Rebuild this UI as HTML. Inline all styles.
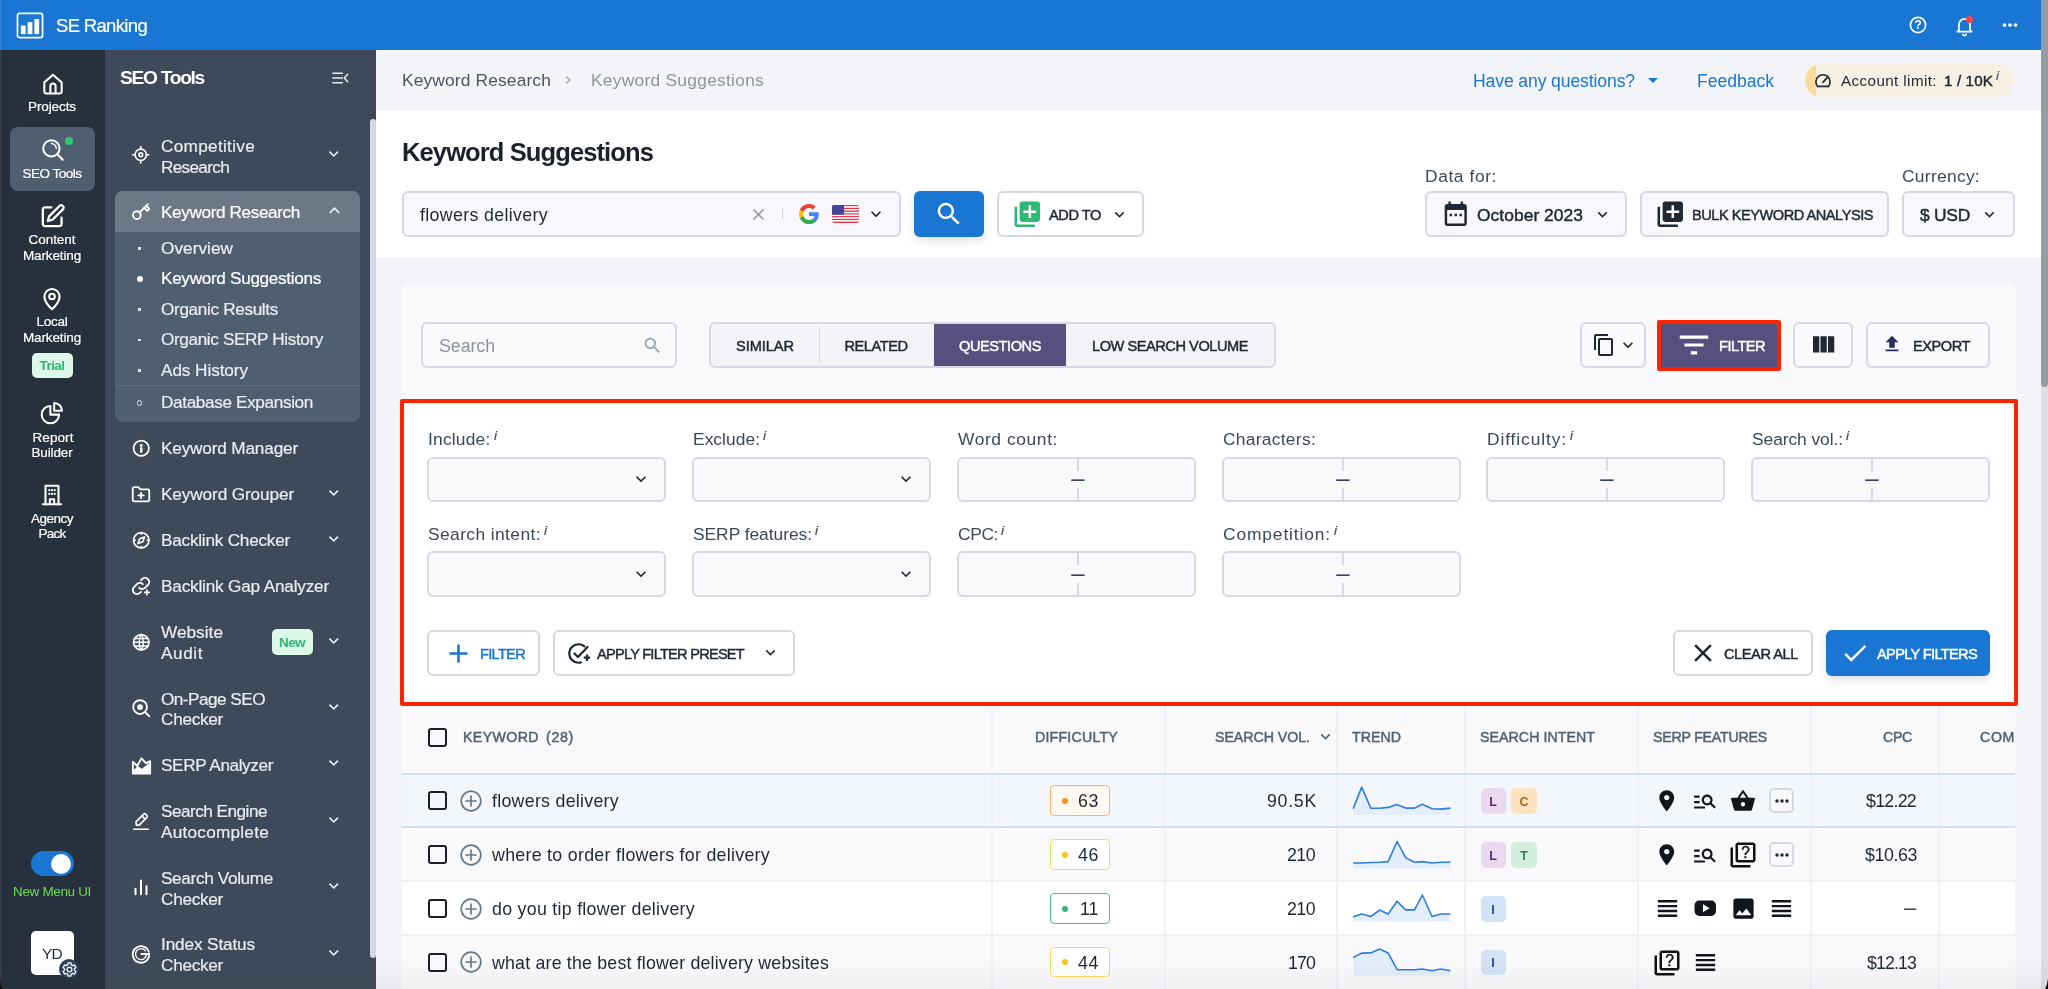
<!DOCTYPE html>
<html lang="en"><head><meta charset="utf-8"><title>Keyword Suggestions - SE Ranking</title><style>
html,body{margin:0;padding:0}
body{width:2048px;height:989px;overflow:hidden;position:relative;background:#f3f4f8;font-family:"Liberation Sans",sans-serif;-webkit-font-smoothing:antialiased}
.b{position:absolute;display:block}
.t{position:absolute;white-space:nowrap;will-change:transform}
</style></head><body>
<div class="b" style="left:376px;top:50px;width:1665px;height:60px;background:#f3f4f8;"></div>
<div class="b" style="left:376px;top:110px;width:1665px;height:148px;background:#ffffff;"></div>
<div class="b" style="left:376px;top:258px;width:1665px;height:731px;background:#f3f4f8;"></div>
<div class="b" style="left:2041px;top:0px;width:7px;height:989px;background:#dddde3;"></div>
<div class="b" style="left:2041px;top:0px;width:7px;height:387px;background:#979ba4;border-radius:0 0 4px 4px;"></div>
<div class="b" style="left:0px;top:0px;width:2041px;height:50px;background:#1976d2;"></div>
<div class="b" style="left:0px;top:50px;width:105px;height:939px;background:#26313d;"></div>
<div class="b" style="left:105px;top:50px;width:271px;height:939px;background:#3e4a59;"></div>
<div class="b" style="left:370px;top:119px;width:6px;height:839px;background:#d6d8e8;border-radius:3px;"></div>
<div class="b" style="left:0px;top:0px;width:1px;height:50px;background:#2f83da;"></div>
<div class="b" style="left:0px;top:50px;width:1px;height:939px;background:#343f4c;"></div>
<svg class="b" style="left:15.5px;top:11.5px;" width="28" height="27" viewBox="0 0 29 28"><rect x="1.5" y="1.5" width="26" height="25" rx="2" fill="none" stroke="#fff" stroke-width="1.8"/><rect x="5" y="14" width="5" height="9" fill="#fff"/><rect x="12" y="10.5" width="5" height="12.5" fill="#fff"/><rect x="19" y="7.200" width="5" height="15.800" fill="#fff"/></svg>
<div class="t" style="top:13.5px;font-size:18.5px;line-height:24px;color:#fff;-webkit-text-stroke:0.2px #fff;letter-spacing:-0.67px;left:56px;">SE Ranking</div>
<svg class="b" style="left:1907.8px;top:14.5px;will-change:transform;" width="20" height="20" viewBox="0 0 20 20"><circle cx="10" cy="10" r="7.6" fill="none" stroke="#fff" stroke-width="1.7"/><text x="10" y="14.400" font-size="12.5" font-weight="700" fill="#fff" text-anchor="middle" font-family="Liberation Sans, sans-serif">?</text></svg>
<svg class="b" style="left:1952.5px;top:13.5px;" width="23" height="23" viewBox="0 0 24 24"><g fill="none" stroke="#fff" stroke-width="1.8" stroke-linecap="round" stroke-linejoin="round"><path d="M6.200 16.800V11a5.800 5.800 0 0 1 11.600 0v5.800l1.700 1.500H4.500z"/><path d="M10.300 21.300a1.800 1.800 0 0 0 3.400 0"/></g></svg>
<div class="b" style="left:1966px;top:16px;width:7px;height:7px;border-radius:4px;background:#ff4545"></div>
<svg class="b" style="left:1999.0px;top:14.0px;" width="22" height="22" viewBox="0 0 24 24"><path d="M6 10c-1.1 0-2 .9-2 2s.9 2 2 2 2-.9 2-2-.9-2-2-2zm12 0c-1.1 0-2 .9-2 2s.9 2 2 2 2-.9 2-2-.9-2-2-2zm-6 0c-1.1 0-2 .9-2 2s.9 2 2 2 2-.9 2-2-.9-2-2-2z" fill="#fff"/></svg>
<svg class="b" style="left:39.5px;top:70.5px;" width="26" height="26" viewBox="0 0 24 24"><g fill="none" stroke="#fff" stroke-width="1.9" stroke-linecap="round" stroke-linejoin="round"><path d="M4 10.5L12 3.5l8 7V19a1.8 1.8 0 0 1-1.8 1.8H5.8A1.8 1.8 0 0 1 4 19z"/><path d="M9.6 20.5V14a2.4 2.4 0 0 1 4.8 0v6.5"/></g></svg>
<div class="t" style="top:97.5px;font-size:13.5px;line-height:18px;color:#ffffff;-webkit-text-stroke:0.2px #ffffff;letter-spacing:-0.098px;left:-447.549px;width:1000px;text-align:center;">Projects</div>
<div class="b" style="left:10px;top:127px;width:85px;height:64px;background:#505f6f;border-radius:8px;"></div>
<svg class="b" style="left:40.0px;top:137.0px;" width="26" height="26" viewBox="0 0 24 24"><g fill="none" stroke="#fff" stroke-width="1.9" stroke-linecap="round" stroke-linejoin="round"><circle cx="10.5" cy="10.5" r="7.5"/><path d="M16 16l5 5"/><path d="M10.5 6a4.5 4.5 0 0 1 4.5 4.5" stroke-width="1.3"/></g></svg>
<div class="b" style="left:65px;top:137px;width:8px;height:8px;border-radius:4px;background:#2ecc71"></div>
<div class="t" style="top:164.5px;font-size:13.5px;line-height:18px;color:#ffffff;-webkit-text-stroke:0.2px #ffffff;letter-spacing:-0.505px;left:-447.7525px;width:1000px;text-align:center;">SEO Tools</div>
<svg class="b" style="left:38.0px;top:202.0px;" width="29" height="29" viewBox="0 0 24 24"><g fill="none" stroke="#fff" stroke-width="1.9" stroke-linecap="round" stroke-linejoin="round"><path d="M11 4.5H6A2 2 0 0 0 4 6.5v11.5a2 2 0 0 0 2 2h11.5a2 2 0 0 0 2-2V13"/><path d="M17.8 3.3a1.9 1.9 0 0 1 2.8 2.8L12 14.7l-3.8 1 1-3.8z"/></g></svg>
<div class="t" style="top:230.5px;font-size:13.5px;line-height:18px;color:#ffffff;-webkit-text-stroke:0.2px #ffffff;letter-spacing:-0.042px;left:-447.521px;width:1000px;text-align:center;">Content</div>
<div class="t" style="top:246.5px;font-size:13.5px;line-height:18px;color:#ffffff;-webkit-text-stroke:0.2px #ffffff;letter-spacing:-0.142px;left:-447.571px;width:1000px;text-align:center;">Marketing</div>
<svg class="b" style="left:39.0px;top:286.0px;" width="26" height="26" viewBox="0 0 24 24"><g fill="none" stroke="#fff" stroke-width="1.9" stroke-linecap="round" stroke-linejoin="round"><path d="M12 21.5s-7-6.3-7-11.8a7 7 0 0 1 14 0c0 5.500-7 11.800-7 11.800z"/><circle cx="12" cy="9.700" r="2.600"/></g></svg>
<div class="t" style="top:312.5px;font-size:13.5px;line-height:18px;color:#ffffff;-webkit-text-stroke:0.2px #ffffff;letter-spacing:-0.256px;left:-447.628px;width:1000px;text-align:center;">Local</div>
<div class="t" style="top:328.5px;font-size:13.5px;line-height:18px;color:#ffffff;-webkit-text-stroke:0.2px #ffffff;letter-spacing:-0.142px;left:-447.571px;width:1000px;text-align:center;">Marketing</div>
<div class="b" style="left:32px;top:353px;width:41px;height:25px;background:#ddf8e8;border-radius:5px;"></div>
<div class="t" style="top:357.0px;font-size:13.5px;line-height:18px;color:#2fb774;font-weight:700;letter-spacing:-0.553px;left:-447.7765px;width:1000px;text-align:center;">Trial</div>
<svg class="b" style="left:39.0px;top:400.0px;" width="26" height="26" viewBox="0 0 24 24"><g fill="none" stroke="#fff" stroke-width="1.9" stroke-linecap="round" stroke-linejoin="round"><path d="M10.500 5.500a8 8 0 1 0 8 8h-8z"/><path d="M14 2.800V10h7.200A7.300 7.300 0 0 0 14 2.800z"/></g></svg>
<div class="t" style="top:428.5px;font-size:13.5px;line-height:18px;color:#ffffff;-webkit-text-stroke:0.2px #ffffff;letter-spacing:0.078px;left:-447.461px;width:1000px;text-align:center;">Report</div>
<div class="t" style="top:443.5px;font-size:13.5px;line-height:18px;color:#ffffff;-webkit-text-stroke:0.2px #ffffff;letter-spacing:-0.147px;left:-447.5735px;width:1000px;text-align:center;">Builder</div>
<svg class="b" style="left:39.0px;top:482.0px;" width="26" height="26" viewBox="0 0 24 24"><g fill="none" stroke="#fff" stroke-width="1.9" stroke-linecap="round" stroke-linejoin="round"><path d="M6 20.500V3.500h12v17"/><path d="M3.500 20.500h17"/><path d="M10 20.500v-4.500h4v4.500"/><path d="M9.500 7.500h.01M12 7.500h.01M14.500 7.500h.01M9.500 11h.01M12 11h.01M14.500 11h.01" stroke-width="2"/></g></svg>
<div class="t" style="top:509.5px;font-size:13.5px;line-height:18px;color:#ffffff;-webkit-text-stroke:0.2px #ffffff;letter-spacing:-0.505px;left:-447.7525px;width:1000px;text-align:center;">Agency</div>
<div class="t" style="top:524.5px;font-size:13.5px;line-height:18px;color:#ffffff;-webkit-text-stroke:0.2px #ffffff;letter-spacing:-0.754px;left:-447.877px;width:1000px;text-align:center;">Pack</div>
<div class="b" style="left:31px;top:851px;width:43px;height:25px;background:#1976d2;border-radius:12.5px;"></div>
<div class="b" style="left:51px;top:853.5px;width:20px;height:20px;background:#fff;border-radius:10px;"></div>
<div class="t" style="top:882.5px;font-size:13.5px;line-height:18px;color:#6fdc4c;letter-spacing:-0.344px;left:-447.672px;width:1000px;text-align:center;">New Menu UI</div>
<div class="b" style="left:31px;top:931px;width:43px;height:44px;background:#fff;border-radius:5px;"></div>
<div class="t" style="top:943.5px;font-size:15.5px;line-height:20px;color:#1f2733;letter-spacing:-0.773px;left:-447.8865px;width:1000px;text-align:center;">YD</div>
<div class="b" style="left:59px;top:959px;width:20px;height:20px;border-radius:10px;background:#2e4057"></div>
<svg class="b" style="left:60.9px;top:961.3px;" width="17" height="17" viewBox="0 0 24 24"><g fill="none" stroke="#eef1f6" stroke-width="2" stroke-linejoin="round"><path d="M9.46 5.37L9.89 2.84L14.11 2.84L14.54 5.37L16.47 6.48L18.87 5.59L20.99 9.25L19.01 10.89L19.01 13.11L20.99 14.75L18.87 18.41L16.47 17.52L14.54 18.63L14.11 21.16L9.89 21.16L9.46 18.63L7.53 17.52L5.13 18.41L3.01 14.75L4.99 13.11L4.99 10.89L3.01 9.25L5.13 5.59L7.53 6.48z"/><circle cx="12" cy="12" r="3.300"/></g></svg>
<div class="t" style="top:64.5px;font-size:19.2px;line-height:25px;color:#fff;font-weight:700;letter-spacing:-1.288px;left:120px;">SEO Tools</div>
<svg class="b" style="left:330px;top:69px;" width="20" height="18" viewBox="0 0 21 18"><g fill="none" stroke="#e9ecf1" stroke-width="1.6" stroke-linecap="round"><path d="M3 4h10M3 9h10M3 14h10"/><path d="M18.500 5l-3.500 4 3.500 4" stroke-linejoin="round"/></g></svg>
<svg class="b" style="left:131.2px;top:145.2px;" width="19.5" height="19.5" viewBox="0 0 24 24"><g fill="none" stroke="#fff" stroke-width="2" stroke-linecap="round" stroke-linejoin="round"><circle cx="12" cy="12" r="7"/><circle cx="12" cy="12" r="2.300"/><path d="M12 2v3M12 19v3M2 12h3M19 12h3"/></g></svg>
<div class="t" style="top:135.0px;font-size:17.2px;line-height:22px;color:#e9ecf1;-webkit-text-stroke:0.2px #e9ecf1;letter-spacing:0.295px;left:161.3px;">Competitive</div>
<div class="t" style="top:155.5px;font-size:17.2px;line-height:22px;color:#e9ecf1;-webkit-text-stroke:0.2px #e9ecf1;letter-spacing:-0.695px;left:161.3px;">Research</div>
<svg class="b" style="left:324.2px;top:144.2px;" width="19.5" height="19.5" viewBox="0 0 24 24"><path d="M16.59 8.59L12 13.17 7.41 8.59 6 10l6 6 6-6z" fill="#e9ecf1"/></svg>
<div class="b" style="left:115px;top:191px;width:245px;height:231px;border-radius:8px;background:#505f6f;overflow:hidden"><div style="height:41px;background:#6c7885"></div></div>
<svg class="b" style="left:130.0px;top:200.0px;" width="22" height="22" viewBox="0 0 24 24"><g fill="none" stroke="#fff" stroke-width="2" stroke-linecap="round" stroke-linejoin="round"><circle cx="7.500" cy="16.500" r="4.200"/><path d="M10.600 13.400L19.500 4.500"/><path d="M15.500 8.500l3.300 3.300 2.200-2.200-3.300-3.300"/></g></svg>
<div class="t" style="top:200.5px;font-size:17.2px;line-height:22px;color:#fff;-webkit-text-stroke:0.2px #fff;letter-spacing:-0.389px;left:161.3px;">Keyword Research</div>
<svg class="b" style="left:323.5px;top:200.0px;" width="21" height="21" viewBox="0 0 24 24"><path d="M12 8l-6 6 1.41 1.41L12 10.83l4.59 4.58L18 14z" fill="#e9ecf1"/></svg>
<div class="b" style="left:138px;top:247px;width:2.500px;height:2.500px;background:#dfe3ea"></div>
<div class="t" style="top:236.5px;font-size:17.2px;line-height:22px;color:#e9ecf1;-webkit-text-stroke:0.2px #e9ecf1;letter-spacing:0.045px;left:161.3px;">Overview</div>
<div class="b" style="left:136.500px;top:276.0px;width:6px;height:6px;border-radius:3px;background:#fff"></div>
<div class="t" style="top:267.0px;font-size:17.2px;line-height:22px;color:#fff;-webkit-text-stroke:0.2px #fff;letter-spacing:-0.329px;left:161.3px;">Keyword Suggestions</div>
<div class="b" style="left:138px;top:308px;width:2.500px;height:2.500px;background:#dfe3ea"></div>
<div class="t" style="top:297.5px;font-size:17.2px;line-height:22px;color:#e9ecf1;-webkit-text-stroke:0.2px #e9ecf1;letter-spacing:-0.352px;left:161.3px;">Organic Results</div>
<div class="b" style="left:138px;top:338.5px;width:2.500px;height:2.500px;background:#dfe3ea"></div>
<div class="t" style="top:328.0px;font-size:17.2px;line-height:22px;color:#e9ecf1;-webkit-text-stroke:0.2px #e9ecf1;letter-spacing:-0.385px;left:161.3px;">Organic SERP History</div>
<div class="b" style="left:138px;top:369px;width:2.500px;height:2.500px;background:#dfe3ea"></div>
<div class="t" style="top:358.5px;font-size:17.2px;line-height:22px;color:#e9ecf1;-webkit-text-stroke:0.2px #e9ecf1;letter-spacing:-0.08px;left:161.3px;">Ads History</div>
<div class="b" style="left:115px;top:385px;width:245px;height:1px;background:#5f6d7c;"></div>
<div class="b" style="left:136.500px;top:399.500px;width:5px;height:6px;border-radius:3px;border:1.300px solid #dfe3ea;box-sizing:border-box"></div>
<div class="t" style="top:390.5px;font-size:17.2px;line-height:22px;color:#e9ecf1;-webkit-text-stroke:0.2px #e9ecf1;letter-spacing:-0.368px;left:161.3px;">Database Expansion</div>
<svg class="b" style="left:130.8px;top:437.8px;" width="20.5" height="20.5" viewBox="0 0 24 24"><g fill="none" stroke="#fff" stroke-width="2" stroke-linecap="round" stroke-linejoin="round"><circle cx="12" cy="12" r="9"/><path d="M12 16v-4" stroke-width="2.800"/><circle cx="12" cy="8.800" r="1.700" fill="#fff" stroke="none"/></g></svg>
<div class="t" style="top:436.5px;font-size:17.2px;line-height:22px;color:#e9ecf1;-webkit-text-stroke:0.2px #e9ecf1;letter-spacing:-0.166px;left:161.3px;">Keyword Manager</div>
<svg class="b" style="left:130.0px;top:483.0px;" width="22" height="22" viewBox="0 0 24 24"><g fill="none" stroke="#fff" stroke-width="2" stroke-linecap="round" stroke-linejoin="round"><path d="M3 6a1.500 1.500 0 0 1 1.500-1.500H9l2.500 2.500h8A1.500 1.500 0 0 1 21 8.500V18.500a1.500 1.500 0 0 1-1.500 1.500h-15A1.500 1.500 0 0 1 3 18.500z"/><path d="M12 10.500v6M9 13.500h6"/></g></svg>
<div class="t" style="top:482.5px;font-size:17.2px;line-height:22px;color:#e9ecf1;-webkit-text-stroke:0.2px #e9ecf1;letter-spacing:-0.114px;left:161.3px;">Keyword Grouper</div>
<svg class="b" style="left:324.2px;top:483.2px;" width="19.5" height="19.5" viewBox="0 0 24 24"><path d="M16.59 8.59L12 13.17 7.41 8.59 6 10l6 6 6-6z" fill="#e9ecf1"/></svg>
<svg class="b" style="left:130.8px;top:529.8px;" width="20.5" height="20.5" viewBox="0 0 24 24"><g fill="none" stroke="#fff" stroke-width="2" stroke-linecap="round" stroke-linejoin="round"><circle cx="12" cy="12" r="9"/><path d="M15.800 8.200l-2 5.600-5.600 2 2-5.600z"/><path d="M12 3v2M12 19v2M3 12h2M19 12h2" stroke-width="1.600"/></g></svg>
<div class="t" style="top:528.5px;font-size:17.2px;line-height:22px;color:#e9ecf1;-webkit-text-stroke:0.2px #e9ecf1;letter-spacing:-0.236px;left:161.3px;">Backlink Checker</div>
<svg class="b" style="left:324.2px;top:529.2px;" width="19.5" height="19.5" viewBox="0 0 24 24"><path d="M16.59 8.59L12 13.17 7.41 8.59 6 10l6 6 6-6z" fill="#e9ecf1"/></svg>
<svg class="b" style="left:130.0px;top:575.0px;" width="22" height="22" viewBox="0 0 24 24"><g fill="none" stroke="#fff" stroke-width="2" stroke-linecap="round" stroke-linejoin="round"><path d="M10 14a4.500 4.500 0 0 0 6.400 0l3.200-3.200a4.500 4.500 0 0 0-6.400-6.400l-1.200 1.200"/><path d="M14 10a4.500 4.500 0 0 0-6.400 0l-3.200 3.200a4.500 4.500 0 0 0 6.400 6.400l1.200-1.200"/><path d="M18.500 16.500v5M16 19h5" stroke-width="1.800"/></g></svg>
<div class="t" style="top:574.5px;font-size:17.2px;line-height:22px;color:#e9ecf1;-webkit-text-stroke:0.2px #e9ecf1;letter-spacing:-0.189px;left:161.3px;">Backlink Gap Analyzer</div>
<svg class="b" style="left:130.8px;top:631.8px;" width="20.5" height="20.5" viewBox="0 0 24 24"><g fill="none" stroke="#fff" stroke-width="2" stroke-linecap="round" stroke-linejoin="round"><circle cx="12" cy="12" r="9"/><path d="M3 12h18M12 3c3 3 3 15 0 18M12 3c-3 3-3 15 0 18M4.500 7.500h15M4.500 16.500h15" stroke-width="1.700"/></g></svg>
<div class="t" style="top:621.0px;font-size:17.2px;line-height:22px;color:#e9ecf1;-webkit-text-stroke:0.2px #e9ecf1;letter-spacing:0.031px;left:161.3px;">Website</div>
<div class="t" style="top:641.5px;font-size:17.2px;line-height:22px;color:#e9ecf1;-webkit-text-stroke:0.2px #e9ecf1;letter-spacing:0.562px;left:161.3px;">Audit</div>
<div class="b" style="left:272px;top:629px;width:41px;height:26px;background:#ddf8e8;border-radius:5px;"></div>
<div class="t" style="top:633.5px;font-size:13.5px;line-height:18px;color:#2fb774;font-weight:700;letter-spacing:-0.589px;left:-207.7945px;width:1000px;text-align:center;">New</div>
<svg class="b" style="left:324.2px;top:631.2px;" width="19.5" height="19.5" viewBox="0 0 24 24"><path d="M16.59 8.59L12 13.17 7.41 8.59 6 10l6 6 6-6z" fill="#e9ecf1"/></svg>
<svg class="b" style="left:130.0px;top:697.0px;" width="22" height="22" viewBox="0 0 24 24"><g fill="none" stroke="#fff" stroke-width="2" stroke-linecap="round" stroke-linejoin="round"><circle cx="11" cy="11" r="7.500"/><circle cx="11" cy="11" r="2.200" fill="#fff"/><path d="M16.500 16.500l4.500 4.500"/></g></svg>
<div class="t" style="top:687.5px;font-size:17.2px;line-height:22px;color:#e9ecf1;-webkit-text-stroke:0.2px #e9ecf1;letter-spacing:-0.534px;left:161.3px;">On-Page SEO</div>
<div class="t" style="top:708.0px;font-size:17.2px;line-height:22px;color:#e9ecf1;-webkit-text-stroke:0.2px #e9ecf1;letter-spacing:-0.286px;left:161.3px;">Checker</div>
<svg class="b" style="left:324.2px;top:697.2px;" width="19.5" height="19.5" viewBox="0 0 24 24"><path d="M16.59 8.59L12 13.17 7.41 8.59 6 10l6 6 6-6z" fill="#e9ecf1"/></svg>
<svg class="b" style="left:129.5px;top:753.5px;" width="23" height="23" viewBox="0 0 24 24"><path d="M3 20.500V8l4.500 4.500L12 4.500l4.500 5 4.500-2v13z" fill="none" stroke="#fff" stroke-width="2" stroke-linejoin="round"/><path d="M3 20.500v-3l5-5 4.500 3 8.500-7v12z" fill="#fff"/></svg>
<div class="t" style="top:753.5px;font-size:17.2px;line-height:22px;color:#e9ecf1;-webkit-text-stroke:0.2px #e9ecf1;letter-spacing:-0.4px;left:161.3px;">SERP Analyzer</div>
<svg class="b" style="left:324.2px;top:753.2px;" width="19.5" height="19.5" viewBox="0 0 24 24"><path d="M16.59 8.59L12 13.17 7.41 8.59 6 10l6 6 6-6z" fill="#e9ecf1"/></svg>
<svg class="b" style="left:130.0px;top:810.0px;" width="22" height="22" viewBox="0 0 24 24"><g fill="none" stroke="#fff" stroke-width="1.8" stroke-linecap="round" stroke-linejoin="round"><path d="M4 21h16" /><path d="M7 16.500l-.500-3.500L15 4.500a1.500 1.500 0 0 1 2 0l1.500 1.500a1.500 1.500 0 0 1 0 2L10 16.500z"/><path d="M13 6.500l3.500 3.500"/></g></svg>
<div class="t" style="top:800.0px;font-size:17.2px;line-height:22px;color:#e9ecf1;-webkit-text-stroke:0.2px #e9ecf1;letter-spacing:-0.52px;left:161.3px;">Search Engine</div>
<div class="t" style="top:820.5px;font-size:17.2px;line-height:22px;color:#e9ecf1;-webkit-text-stroke:0.2px #e9ecf1;letter-spacing:0.241px;left:161.3px;">Autocomplete</div>
<svg class="b" style="left:324.2px;top:810.2px;" width="19.5" height="19.5" viewBox="0 0 24 24"><path d="M16.59 8.59L12 13.17 7.41 8.59 6 10l6 6 6-6z" fill="#e9ecf1"/></svg>
<svg class="b" style="left:130.0px;top:876.0px;" width="22" height="22" viewBox="0 0 24 24"><g fill="none" stroke="#fff" stroke-width="2.2" stroke-linecap="round" stroke-linejoin="round"><path d="M6 20v-6M12 20V5M18 20v-9"/></g></svg>
<div class="t" style="top:867.0px;font-size:17.2px;line-height:22px;color:#e9ecf1;-webkit-text-stroke:0.2px #e9ecf1;letter-spacing:-0.351px;left:161.3px;">Search Volume</div>
<div class="t" style="top:887.5px;font-size:17.2px;line-height:22px;color:#e9ecf1;-webkit-text-stroke:0.2px #e9ecf1;letter-spacing:-0.286px;left:161.3px;">Checker</div>
<svg class="b" style="left:324.2px;top:876.2px;" width="19.5" height="19.5" viewBox="0 0 24 24"><path d="M16.59 8.59L12 13.17 7.41 8.59 6 10l6 6 6-6z" fill="#e9ecf1"/></svg>
<svg class="b" style="left:130.0px;top:943.0px;" width="22" height="22" viewBox="0 0 24 24"><g fill="none" stroke="#fff" stroke-width="2" stroke-linecap="round" stroke-linejoin="round"><path d="M20.500 9.500A9 9 0 1 0 21 12h-8.500"/><path d="M16.800 8.500a6 6 0 1 0 1.200 3.500" stroke-width="1.500"/></g></svg>
<div class="t" style="top:933.0px;font-size:17.2px;line-height:22px;color:#e9ecf1;-webkit-text-stroke:0.2px #e9ecf1;letter-spacing:-0.129px;left:161.3px;">Index Status</div>
<div class="t" style="top:953.5px;font-size:17.2px;line-height:22px;color:#e9ecf1;-webkit-text-stroke:0.2px #e9ecf1;letter-spacing:-0.286px;left:161.3px;">Checker</div>
<svg class="b" style="left:324.2px;top:943.2px;" width="19.5" height="19.5" viewBox="0 0 24 24"><path d="M16.59 8.59L12 13.17 7.41 8.59 6 10l6 6 6-6z" fill="#e9ecf1"/></svg>
<div class="t" style="top:68.5px;font-size:17.4px;line-height:23px;color:#4a5565;letter-spacing:0.13px;left:402px;">Keyword Research</div>
<svg class="b" style="left:563px;top:74px;" width="10" height="12" viewBox="0 0 10 12"><path d="M3 2.500l4 3.500-4 3.500" fill="none" stroke="#9aa3af" stroke-width="1.300"/></svg>
<div class="t" style="top:68.5px;font-size:17.4px;line-height:23px;color:#8b95a1;letter-spacing:0.252px;left:591px;">Keyword Suggestions</div>
<div class="t" style="top:69.5px;font-size:17.6px;line-height:23px;color:#1976d2;letter-spacing:-0.123px;left:1473px;">Have any questions?</div>
<svg class="b" style="left:1641.0px;top:68.0px;" width="24" height="24" viewBox="0 0 24 24"><path d="M7 10l5 5 5-5z" fill="#1976d2"/></svg>
<div class="t" style="top:69.5px;font-size:17.6px;line-height:23px;color:#1976d2;letter-spacing:-0.033px;left:1697px;">Feedback</div>
<div class="b" style="left:1805px;top:64px;width:210px;height:33px;border-radius:17px;background:#f6f0e3;overflow:hidden"><div style="width:11px;height:33px;background:#f9dc9c"></div></div>
<svg class="b" style="left:1813px;top:70.5px;" width="20" height="20" viewBox="0 0 24 24"><g fill="none" stroke="#1f2733" stroke-width="2" stroke-linecap="round"><path d="M5.500 18.500A8.500 8.500 0 1 1 18.500 18.500"/><path d="M12 13.500l4.500-5" stroke-width="2.200"/><path d="M6 18.500h12"/></g></svg>
<div class="t" style="top:70.5px;font-size:15.2px;line-height:20px;color:#1f2733;letter-spacing:0.406px;left:1841px;">Account limit:</div>
<div class="t" style="top:70.5px;font-size:15.2px;line-height:20px;color:#1f2733;-webkit-text-stroke:0.45px #1f2733;letter-spacing:0.123px;left:1944px;">1 / 10K</div>
<div class="t" style="top:66.5px;font-size:13.5px;line-height:18px;color:#4a6585;font-style:italic;-webkit-text-stroke:0.2px #4a6585;left:1996px;">i</div>
<div class="t" style="top:135.5px;font-size:25.5px;line-height:33px;color:#1a202c;font-weight:700;letter-spacing:-0.884px;left:402px;">Keyword Suggestions</div>
<div class="b" style="left:402px;top:191px;width:499px;height:46px;background:#f8f8fc;border:2px solid #d6d8e6;border-radius:6px;box-sizing:border-box;"></div>
<div class="t" style="top:204.3px;font-size:17.8px;line-height:23px;color:#1f2733;letter-spacing:0.341px;left:419.5px;">flowers delivery</div>
<svg class="b" style="left:748.5px;top:204.5px;" width="19" height="19" viewBox="0 0 24 24"><path d="M19 6.41L17.59 5 12 10.59 6.41 5 5 6.41 10.59 12 5 17.59 6.41 19 12 13.41 17.59 19 19 17.59 13.41 12z" fill="#8f98a5"/></svg>
<div class="b" style="left:781.5px;top:209px;width:1px;height:10px;background:#c9cdd6;"></div>
<svg class="b" style="left:798px;top:203px;" width="22" height="22" viewBox="0 0 48 48"><path fill="#4285F4" d="M45.120 24.500c0-1.560-.140-3.060-.400-4.500H24v8.510h11.840c-.510 2.750-2.060 5.080-4.390 6.640v5.520h7.110c4.160-3.830 6.560-9.470 6.560-16.170z"/><path fill="#34A853" d="M24 46c5.940 0 10.920-1.970 14.560-5.330l-7.110-5.520c-1.970 1.320-4.490 2.100-7.450 2.100-5.730 0-10.580-3.870-12.310-9.070H4.340v5.700C7.960 41.070 15.400 46 24 46z"/><path fill="#FBBC05" d="M11.690 28.180C11.250 26.860 11 25.450 11 24s.250-2.860.690-4.180v-5.700H4.340C2.850 17.090 2 20.450 2 24c0 3.550.850 6.910 2.340 9.880l7.350-5.700z"/><path fill="#EA4335" d="M24 10.750c3.230 0 6.130 1.110 8.410 3.290l6.310-6.310C34.910 4.180 29.930 2 24 2 15.400 2 7.960 6.930 4.340 14.120l7.350 5.700c1.730-5.200 6.580-9.070 12.310-9.070z"/></svg>
<svg class="b" style="left:832px;top:205px;border-radius:2px;" width="27" height="18" viewBox="0 0 27 18"><rect x="0" y="0.000" width="27" height="1.385" fill="#e0364a"/><rect x="0" y="1.385" width="27" height="1.385" fill="#fff"/><rect x="0" y="2.770" width="27" height="1.385" fill="#e0364a"/><rect x="0" y="4.155" width="27" height="1.385" fill="#fff"/><rect x="0" y="5.540" width="27" height="1.385" fill="#e0364a"/><rect x="0" y="6.925" width="27" height="1.385" fill="#fff"/><rect x="0" y="8.310" width="27" height="1.385" fill="#e0364a"/><rect x="0" y="9.695" width="27" height="1.385" fill="#fff"/><rect x="0" y="11.080" width="27" height="1.385" fill="#e0364a"/><rect x="0" y="12.465" width="27" height="1.385" fill="#fff"/><rect x="0" y="13.850" width="27" height="1.385" fill="#e0364a"/><rect x="0" y="15.235" width="27" height="1.385" fill="#fff"/><rect x="0" y="16.620" width="27" height="1.385" fill="#e0364a"/><rect width="12" height="9.700" fill="#41479b"/></svg>
<svg class="b" style="left:866.0px;top:204.0px;" width="20" height="20" viewBox="0 0 24 24"><path d="M16.59 8.59L12 13.17 7.41 8.59 6 10l6 6 6-6z" fill="#1f2733"/></svg>
<div class="b" style="left:914px;top:191px;width:70px;height:46px;background:#1976d2;border-radius:6px;box-shadow:0 4px 8px rgba(30,40,80,.13);"></div>
<svg class="b" style="left:934.0px;top:199.0px;" width="30" height="30" viewBox="0 0 24 24"><path d="M15.5 14h-.79l-.28-.27C15.41 12.59 16 11.11 16 9.5 16 5.91 13.09 3 9.5 3S3 5.91 3 9.5 5.91 16 9.5 16c1.61 0 3.09-.59 4.23-1.57l.27.28v.79l5 4.99L20.49 19l-4.99-5zm-6 0C7.01 14 5 11.99 5 9.5S7.01 5 9.5 5 14 7.01 14 9.5 11.99 14 9.5 14z" fill="#fff"/></svg>
<div class="b" style="left:997px;top:191px;width:147px;height:46px;background:#fff;border:2px solid #d6d8e6;border-radius:6px;box-sizing:border-box;"></div>
<svg class="b" style="left:1011.8px;top:198.8px;" width="30.5" height="30.5" viewBox="0 0 24 24"><path d="M4 6H2v14c0 1.1.9 2 2 2h14v-2H4V6zm16-4H8c-1.1 0-2 .9-2 2v12c0 1.1.9 2 2 2h12c1.1 0 2-.9 2-2V4c0-1.1-.9-2-2-2zm-1 9h-4v4h-2v-4H9V9h4V5h2v4h4v2z" fill="#2fb774"/></svg>
<div class="t" style="top:205.7px;font-size:14.6px;line-height:19px;color:#1f2733;-webkit-text-stroke:0.45px #1f2733;letter-spacing:-0.435px;left:1049px;">ADD TO</div>
<svg class="b" style="left:1109.5px;top:204.5px;" width="19" height="19" viewBox="0 0 24 24"><path d="M16.59 8.59L12 13.17 7.41 8.59 6 10l6 6 6-6z" fill="#1f2733"/></svg>
<div class="t" style="top:165.0px;font-size:17.4px;line-height:23px;color:#3c4757;letter-spacing:0.589px;left:1425px;">Data for:</div>
<div class="b" style="left:1425px;top:191px;width:202px;height:46px;background:#f8f8fc;border:2px solid #d6d8e6;border-radius:6px;box-sizing:border-box;"></div>
<svg class="b" style="left:1440.8px;top:199.2px;" width="29.5" height="29.5" viewBox="0 0 24 24"><path d="M19 4h-1V2h-2v2H8V2H6v2H5c-1.11 0-1.99.9-1.99 2L3 20c0 1.1.89 2 2 2h14c1.1 0 2-.9 2-2V6c0-1.1-.9-2-2-2zm0 16H5V9h14v11zM9 14H7v-2h2v2zm4 0h-2v-2h2v2zm4 0h-2v-2h2v2z" fill="#1f2733"/></svg>
<div class="t" style="top:204.1px;font-size:17.4px;line-height:23px;color:#1f2733;-webkit-text-stroke:0.45px #1f2733;letter-spacing:0.051px;left:1477px;">October 2023</div>
<svg class="b" style="left:1592.5px;top:204.5px;" width="19" height="19" viewBox="0 0 24 24"><path d="M16.59 8.59L12 13.17 7.41 8.59 6 10l6 6 6-6z" fill="#1f2733"/></svg>
<div class="b" style="left:1640px;top:191px;width:249px;height:46px;background:#f8f8fc;border:2px solid #d6d8e6;border-radius:6px;box-sizing:border-box;"></div>
<svg class="b" style="left:1654.8px;top:198.8px;" width="30.5" height="30.5" viewBox="0 0 24 24"><path d="M4 6H2v14c0 1.1.9 2 2 2h14v-2H4V6zm16-4H8c-1.1 0-2 .9-2 2v12c0 1.1.9 2 2 2h12c1.1 0 2-.9 2-2V4c0-1.1-.9-2-2-2zm-1 9h-4v4h-2v-4H9V9h4V5h2v4h4v2z" fill="#1f2733"/></svg>
<div class="t" style="top:205.7px;font-size:14.6px;line-height:19px;color:#1f2733;-webkit-text-stroke:0.45px #1f2733;letter-spacing:-0.483px;left:1692px;">BULK KEYWORD ANALYSIS</div>
<div class="t" style="top:165.0px;font-size:17.4px;line-height:23px;color:#3c4757;letter-spacing:0.29px;left:1902px;">Currency:</div>
<div class="b" style="left:1902px;top:191px;width:113px;height:46px;background:#f8f8fc;border:2px solid #d6d8e6;border-radius:6px;box-sizing:border-box;"></div>
<div class="t" style="top:204.1px;font-size:17.4px;line-height:23px;color:#1f2733;-webkit-text-stroke:0.45px #1f2733;letter-spacing:-0.247px;left:1920px;">$ USD</div>
<svg class="b" style="left:1979.5px;top:204.5px;" width="19" height="19" viewBox="0 0 24 24"><path d="M16.59 8.59L12 13.17 7.41 8.59 6 10l6 6 6-6z" fill="#1f2733"/></svg>
<div class="b" style="left:402px;top:283px;width:1613px;height:720px;background:#f9f9fc;border-radius:6px;"></div>
<div class="b" style="left:421px;top:322px;width:256px;height:46px;background:#f9f9fc;border:2px solid #d6d8e6;border-radius:6px;box-sizing:border-box;"></div>
<div class="t" style="top:334.9px;font-size:17.8px;line-height:23px;color:#8c929b;letter-spacing:-0.057px;left:439px;">Search</div>
<svg class="b" style="left:641.5px;top:334.5px;" width="21" height="21" viewBox="0 0 24 24"><path d="M15.5 14h-.79l-.28-.27C15.41 12.59 16 11.11 16 9.5 16 5.91 13.09 3 9.5 3S3 5.91 3 9.5 5.91 16 9.5 16c1.61 0 3.09-.59 4.23-1.57l.27.28v.79l5 4.99L20.49 19l-4.99-5zm-6 0C7.01 14 5 11.99 5 9.5S7.01 5 9.5 5 14 7.01 14 9.5 11.99 14 9.5 14z" fill="#9aa2ae"/></svg>
<div class="b" style="left:709px;top:322px;width:567px;height:46px;border:2px solid #d6d8e6;border-radius:6px;background:#f3f4f8;box-sizing:border-box"></div>
<div class="b" style="left:934px;top:324px;width:132px;height:42px;background:#574f7d;"></div>
<div class="b" style="left:818.5px;top:327px;width:1px;height:36px;background:#d6d8e6;"></div>
<div class="t" style="top:336.7px;font-size:14.6px;line-height:19px;color:#1f2733;-webkit-text-stroke:0.45px #1f2733;letter-spacing:-0.056px;left:265.472px;width:1000px;text-align:center;">SIMILAR</div>
<div class="t" style="top:336.7px;font-size:14.6px;line-height:19px;color:#1f2733;-webkit-text-stroke:0.45px #1f2733;letter-spacing:-0.462px;left:376.269px;width:1000px;text-align:center;">RELATED</div>
<div class="t" style="top:336.7px;font-size:14.6px;line-height:19px;color:#fff;-webkit-text-stroke:0.45px #fff;letter-spacing:-0.439px;left:499.7805px;width:1000px;text-align:center;">QUESTIONS</div>
<div class="t" style="top:336.7px;font-size:14.6px;line-height:19px;color:#1f2733;-webkit-text-stroke:0.45px #1f2733;letter-spacing:-0.46px;left:669.77px;width:1000px;text-align:center;">LOW SEARCH VOLUME</div>
<div class="b" style="left:1579.5px;top:322px;width:66.5px;height:46px;background:#f9f9fc;border:2px solid #d6d8e6;border-radius:6px;box-sizing:border-box;"></div>
<svg class="b" style="left:1592.0px;top:333.0px;" width="24" height="24" viewBox="0 0 24 24"><path d="M16 1H4c-1.1 0-2 .9-2 2v14h2V3h12V1zm3 4H8c-1.1 0-2 .9-2 2v14c0 1.1.9 2 2 2h11c1.1 0 2-.9 2-2V7c0-1.1-.9-2-2-2zm0 16H8V7h11v14z" fill="#1f2733"/></svg>
<svg class="b" style="left:1617.5px;top:335.0px;" width="20" height="20" viewBox="0 0 24 24"><path d="M16.59 8.59L12 13.17 7.41 8.59 6 10l6 6 6-6z" fill="#1f2733"/></svg>
<div class="b" style="left:1657px;top:320px;width:124px;height:51px;background:#574f7d;border:4px solid #ff2400;border-radius:2px;box-sizing:border-box;"></div>
<svg class="b" style="left:1674.5px;top:326.0px;" width="38" height="38" viewBox="0 0 24 24"><path d="M10 18h4v-2h-4v2zM3 6v2h18V6H3zm3 7h12v-2H6v2z" fill="#fff"/></svg>
<div class="t" style="top:336.5px;font-size:14.6px;line-height:19px;color:#fff;-webkit-text-stroke:0.45px #fff;letter-spacing:-0.534px;left:1719px;">FILTER</div>
<div class="b" style="left:1793px;top:322px;width:60px;height:46px;background:#f9f9fc;border:2px solid #d6d8e6;border-radius:6px;box-sizing:border-box;"></div>
<svg class="b" style="left:1808.0px;top:329.5px;" width="30" height="30" viewBox="0 0 24 24"><path d="M10 18h5V5h-5v13zm-6 0h5V5H4v13zM16 5v13h5V5h-5z" fill="#1f2733"/></svg>
<div class="b" style="left:1866px;top:322px;width:124px;height:46px;background:#f9f9fc;border:2px solid #d6d8e6;border-radius:6px;box-sizing:border-box;"></div>
<svg class="b" style="left:1880.5px;top:333.0px;" width="22" height="22" viewBox="0 0 24 24"><path d="M9 16h6v-6h4l-7-7-7 7h4zm-4 2h14v2H5z" fill="#2a2f5b"/></svg>
<div class="t" style="top:336.5px;font-size:14.6px;line-height:19px;color:#1f2733;-webkit-text-stroke:0.45px #1f2733;letter-spacing:-0.458px;left:1913px;">EXPORT</div>
<div class="b" style="left:400px;top:399px;width:1618px;height:306.5px;background:#fff;border:4px solid #ff2400;border-radius:2px;box-sizing:border-box;"></div>
<div class="t" style="top:427.5px;font-size:17.4px;line-height:23px;color:#3c4757;letter-spacing:0.197px;left:427.8px;">Include:</div>
<div class="t" style="top:426.5px;font-size:13.5px;line-height:18px;color:#3c4757;font-style:italic;-webkit-text-stroke:0.2px #3c4757;left:493.5px;">i</div>
<div class="b" style="left:427px;top:456.5px;width:239px;height:45.5px;background:#f9f9fc;border:2px solid #d6d8e6;border-radius:6px;box-sizing:border-box;"></div>
<svg class="b" style="left:631.0px;top:469.2px;" width="20" height="20" viewBox="0 0 24 24"><path d="M16.59 8.59L12 13.17 7.41 8.59 6 10l6 6 6-6z" fill="#1f2733"/></svg>
<div class="t" style="top:427.5px;font-size:17.4px;line-height:23px;color:#3c4757;letter-spacing:0.037px;left:692.8px;">Exclude:</div>
<div class="t" style="top:426.5px;font-size:13.5px;line-height:18px;color:#3c4757;font-style:italic;-webkit-text-stroke:0.2px #3c4757;left:763px;">i</div>
<div class="b" style="left:692px;top:456.5px;width:239px;height:45.5px;background:#f9f9fc;border:2px solid #d6d8e6;border-radius:6px;box-sizing:border-box;"></div>
<svg class="b" style="left:896.0px;top:469.2px;" width="20" height="20" viewBox="0 0 24 24"><path d="M16.59 8.59L12 13.17 7.41 8.59 6 10l6 6 6-6z" fill="#1f2733"/></svg>
<div class="t" style="top:427.5px;font-size:17.4px;line-height:23px;color:#3c4757;letter-spacing:0.595px;left:957.8px;">Word count:</div>
<div class="b" style="left:957px;top:456.5px;width:239px;height:45.5px;background:#f9f9fc;border:2px solid #d6d8e6;border-radius:6px;box-sizing:border-box;"></div>
<div class="b" style="left:1077px;top:458.5px;width:1.5px;height:12px;background:#d6d8e6;"></div>
<div class="b" style="left:1077px;top:488.0px;width:1.5px;height:12px;background:#d6d8e6;"></div>
<div class="t" style="top:461.9px;font-size:24px;line-height:31px;color:#3a3f63;left:577.7px;width:1000px;text-align:center;">–</div>
<div class="t" style="top:427.5px;font-size:17.4px;line-height:23px;color:#3c4757;letter-spacing:0.283px;left:1222.8px;">Characters:</div>
<div class="b" style="left:1222px;top:456.5px;width:239px;height:45.5px;background:#f9f9fc;border:2px solid #d6d8e6;border-radius:6px;box-sizing:border-box;"></div>
<div class="b" style="left:1342px;top:458.5px;width:1.5px;height:12px;background:#d6d8e6;"></div>
<div class="b" style="left:1342px;top:488.0px;width:1.5px;height:12px;background:#d6d8e6;"></div>
<div class="t" style="top:461.9px;font-size:24px;line-height:31px;color:#3a3f63;left:842.7px;width:1000px;text-align:center;">–</div>
<div class="t" style="top:427.5px;font-size:17.4px;line-height:23px;color:#3c4757;letter-spacing:0.888px;left:1486.8px;">Difficulty:</div>
<div class="t" style="top:426.5px;font-size:13.5px;line-height:18px;color:#3c4757;font-style:italic;-webkit-text-stroke:0.2px #3c4757;left:1570px;">i</div>
<div class="b" style="left:1486px;top:456.5px;width:239px;height:45.5px;background:#f9f9fc;border:2px solid #d6d8e6;border-radius:6px;box-sizing:border-box;"></div>
<div class="b" style="left:1606px;top:458.5px;width:1.5px;height:12px;background:#d6d8e6;"></div>
<div class="b" style="left:1606px;top:488.0px;width:1.5px;height:12px;background:#d6d8e6;"></div>
<div class="t" style="top:461.9px;font-size:24px;line-height:31px;color:#3a3f63;left:1106.7px;width:1000px;text-align:center;">–</div>
<div class="t" style="top:427.5px;font-size:17.4px;line-height:23px;color:#3c4757;letter-spacing:-0.069px;left:1751.8px;">Search vol.:</div>
<div class="t" style="top:426.5px;font-size:13.5px;line-height:18px;color:#3c4757;font-style:italic;-webkit-text-stroke:0.2px #3c4757;left:1846px;">i</div>
<div class="b" style="left:1751px;top:456.5px;width:239px;height:45.5px;background:#f9f9fc;border:2px solid #d6d8e6;border-radius:6px;box-sizing:border-box;"></div>
<div class="b" style="left:1871px;top:458.5px;width:1.5px;height:12px;background:#d6d8e6;"></div>
<div class="b" style="left:1871px;top:488.0px;width:1.5px;height:12px;background:#d6d8e6;"></div>
<div class="t" style="top:461.9px;font-size:24px;line-height:31px;color:#3a3f63;left:1371.7px;width:1000px;text-align:center;">–</div>
<div class="t" style="top:522.5px;font-size:17.4px;line-height:23px;color:#3c4757;letter-spacing:0.406px;left:427.8px;">Search intent:</div>
<div class="t" style="top:521.5px;font-size:13.5px;line-height:18px;color:#3c4757;font-style:italic;-webkit-text-stroke:0.2px #3c4757;left:544px;">i</div>
<div class="b" style="left:427px;top:551px;width:239px;height:46px;background:#f9f9fc;border:2px solid #d6d8e6;border-radius:6px;box-sizing:border-box;"></div>
<svg class="b" style="left:631.0px;top:564.0px;" width="20" height="20" viewBox="0 0 24 24"><path d="M16.59 8.59L12 13.17 7.41 8.59 6 10l6 6 6-6z" fill="#1f2733"/></svg>
<div class="t" style="top:522.5px;font-size:17.4px;line-height:23px;color:#3c4757;letter-spacing:-0.039px;left:692.8px;">SERP features:</div>
<div class="t" style="top:521.5px;font-size:13.5px;line-height:18px;color:#3c4757;font-style:italic;-webkit-text-stroke:0.2px #3c4757;left:815px;">i</div>
<div class="b" style="left:692px;top:551px;width:239px;height:46px;background:#f9f9fc;border:2px solid #d6d8e6;border-radius:6px;box-sizing:border-box;"></div>
<svg class="b" style="left:896.0px;top:564.0px;" width="20" height="20" viewBox="0 0 24 24"><path d="M16.59 8.59L12 13.17 7.41 8.59 6 10l6 6 6-6z" fill="#1f2733"/></svg>
<div class="t" style="top:522.5px;font-size:17.4px;line-height:23px;color:#3c4757;letter-spacing:-0.391px;left:957.8px;">CPC:</div>
<div class="t" style="top:521.5px;font-size:13.5px;line-height:18px;color:#3c4757;font-style:italic;-webkit-text-stroke:0.2px #3c4757;left:1001px;">i</div>
<div class="b" style="left:957px;top:551px;width:239px;height:46px;background:#f9f9fc;border:2px solid #d6d8e6;border-radius:6px;box-sizing:border-box;"></div>
<div class="b" style="left:1077px;top:553px;width:1.5px;height:12px;background:#d6d8e6;"></div>
<div class="b" style="left:1077px;top:583px;width:1.5px;height:12px;background:#d6d8e6;"></div>
<div class="t" style="top:556.9px;font-size:24px;line-height:31px;color:#3a3f63;left:577.7px;width:1000px;text-align:center;">–</div>
<div class="t" style="top:522.5px;font-size:17.4px;line-height:23px;color:#3c4757;letter-spacing:0.863px;left:1222.8px;">Competition:</div>
<div class="t" style="top:521.5px;font-size:13.5px;line-height:18px;color:#3c4757;font-style:italic;-webkit-text-stroke:0.2px #3c4757;left:1334px;">i</div>
<div class="b" style="left:1222px;top:551px;width:239px;height:46px;background:#f9f9fc;border:2px solid #d6d8e6;border-radius:6px;box-sizing:border-box;"></div>
<div class="b" style="left:1342px;top:553px;width:1.5px;height:12px;background:#d6d8e6;"></div>
<div class="b" style="left:1342px;top:583px;width:1.5px;height:12px;background:#d6d8e6;"></div>
<div class="t" style="top:556.9px;font-size:24px;line-height:31px;color:#3a3f63;left:842.7px;width:1000px;text-align:center;">–</div>
<div class="b" style="left:427px;top:630px;width:113px;height:46px;background:#fff;border:2px solid #d6d8e6;border-radius:6px;box-sizing:border-box;"></div>
<svg class="b" style="left:442.5px;top:637.5px;" width="31" height="31" viewBox="0 0 24 24"><path d="M19 13h-6v6h-2v-6H5v-2h6V5h2v6h6v2z" fill="#1976d2"/></svg>
<div class="t" style="top:644.5px;font-size:14.6px;line-height:19px;color:#1976d2;-webkit-text-stroke:0.45px #1976d2;letter-spacing:-0.701px;left:480px;">FILTER</div>
<div class="b" style="left:553px;top:630px;width:242px;height:46px;background:#fff;border:2px solid #d6d8e6;border-radius:6px;box-sizing:border-box;"></div>
<svg class="b" style="left:567px;top:641.5px;" width="24" height="24" viewBox="0 0 24 24"><g fill="none" stroke="#1f2733" stroke-width="2.200" stroke-linecap="round" stroke-linejoin="round"><path d="M17.410 4.450A9.200 9.200 0 1 0 13.880 20.390"/><path d="M7.500 11.500l3.500 3.500L20.500 5"/><path d="M20 12.500v6.400M16.800 15.700h6.400" stroke-linecap="butt"/></g></svg>
<div class="t" style="top:644.5px;font-size:14.6px;line-height:19px;color:#1f2733;-webkit-text-stroke:0.45px #1f2733;letter-spacing:-0.758px;left:597px;">APPLY FILTER PRESET</div>
<svg class="b" style="left:760.5px;top:643.0px;" width="19" height="19" viewBox="0 0 24 24"><path d="M16.59 8.59L12 13.17 7.41 8.59 6 10l6 6 6-6z" fill="#1f2733"/></svg>
<div class="b" style="left:1673px;top:630px;width:140px;height:46px;background:#fff;border:2px solid #d6d8e6;border-radius:6px;box-sizing:border-box;"></div>
<svg class="b" style="left:1687.5px;top:638.0px;" width="30" height="30" viewBox="0 0 24 24"><path d="M19 6.41L17.59 5 12 10.59 6.41 5 5 6.41 10.59 12 5 17.59 6.41 19 12 13.41 17.59 19 19 17.59 13.41 12z" fill="#1f2733"/></svg>
<div class="t" style="top:644.5px;font-size:14.6px;line-height:19px;color:#1f2733;-webkit-text-stroke:0.45px #1f2733;letter-spacing:-0.432px;left:1724px;">CLEAR ALL</div>
<div class="b" style="left:1826px;top:630px;width:164px;height:46px;background:#1976d2;border-radius:6px;box-shadow:0 4px 8px rgba(30,40,80,.13);"></div>
<svg class="b" style="left:1840.0px;top:638.0px;" width="30" height="30" viewBox="0 0 24 24"><path d="M9 16.17L4.83 12l-1.42 1.41L9 19 21 7l-1.41-1.41z" fill="#fff"/></svg>
<div class="t" style="top:644.5px;font-size:14.6px;line-height:19px;color:#fff;-webkit-text-stroke:0.45px #fff;letter-spacing:-0.668px;left:1877px;">APPLY FILTERS</div>
<div class="b" style="left:402px;top:773px;width:1613px;height:54px;background:#f3f6fb;"></div>
<div class="b" style="left:402px;top:881px;width:1613px;height:54px;background:#ffffff;"></div>
<div class="b" style="left:990.6px;top:706px;width:2.6px;height:283px;background:#f1f2f8;"></div>
<div class="b" style="left:1163.6px;top:706px;width:2.6px;height:283px;background:#f1f2f8;"></div>
<div class="b" style="left:1335.6px;top:706px;width:2.6px;height:283px;background:#f1f2f8;"></div>
<div class="b" style="left:1463.6px;top:706px;width:2.6px;height:283px;background:#f1f2f8;"></div>
<div class="b" style="left:1636.6px;top:706px;width:2.6px;height:283px;background:#f1f2f8;"></div>
<div class="b" style="left:1809.6px;top:706px;width:2.6px;height:283px;background:#f1f2f8;"></div>
<div class="b" style="left:1937.6px;top:706px;width:2.6px;height:283px;background:#f1f2f8;"></div>
<div class="b" style="left:402px;top:773px;width:1613px;height:2px;background:#cfe0f3;"></div>
<div class="b" style="left:402px;top:826.3px;width:1613px;height:2px;background:#cfe0f3;"></div>
<div class="b" style="left:402px;top:880px;width:1613px;height:2px;background:#f0f0f6;"></div>
<div class="b" style="left:402px;top:934px;width:1613px;height:2px;background:#f0f0f6;"></div>
<div class="b" style="left:428px;top:728px;width:19px;height:19px;border:2px solid #1a1f29;border-radius:3px;box-sizing:border-box;"></div>
<div class="t" style="top:727.8px;font-size:14.2px;line-height:18px;color:#4f6272;-webkit-text-stroke:0.45px #4f6272;letter-spacing:0.384px;left:463px;">KEYWORD</div>
<div class="t" style="top:727.8px;font-size:14.2px;line-height:18px;color:#4f6272;-webkit-text-stroke:0.45px #4f6272;letter-spacing:0.691px;left:546px;">(28)</div>
<div class="t" style="top:727.8px;font-size:14.2px;line-height:18px;color:#4f6272;-webkit-text-stroke:0.45px #4f6272;letter-spacing:0.208px;left:1035px;">DIFFICULTY</div>
<div class="t" style="top:727.8px;font-size:14.2px;line-height:18px;color:#4f6272;-webkit-text-stroke:0.45px #4f6272;letter-spacing:-0.037px;left:1215px;">SEARCH VOL.</div>
<svg class="b" style="left:1315.5px;top:727.0px;" width="19" height="19" viewBox="0 0 24 24"><path d="M16.59 8.59L12 13.17 7.41 8.59 6 10l6 6 6-6z" fill="#4f6272"/></svg>
<div class="t" style="top:727.8px;font-size:14.2px;line-height:18px;color:#4f6272;-webkit-text-stroke:0.45px #4f6272;letter-spacing:0.025px;left:1352px;">TREND</div>
<div class="t" style="top:727.8px;font-size:14.2px;line-height:18px;color:#4f6272;-webkit-text-stroke:0.45px #4f6272;letter-spacing:0.054px;left:1480px;">SEARCH INTENT</div>
<div class="t" style="top:727.8px;font-size:14.2px;line-height:18px;color:#4f6272;-webkit-text-stroke:0.45px #4f6272;letter-spacing:-0.227px;left:1653px;">SERP FEATURES</div>
<div class="t" style="top:727.8px;font-size:14.2px;line-height:18px;color:#4f6272;-webkit-text-stroke:0.45px #4f6272;letter-spacing:-0.323px;right:136.323px;">CPC</div>
<div class="t" style="top:727.8px;font-size:14.2px;line-height:18px;color:#4f6272;-webkit-text-stroke:0.45px #4f6272;letter-spacing:0.63px;left:1980px;">COM</div>
<div class="b" style="left:428px;top:791.3px;width:19px;height:19px;border:2px solid #1a1f29;border-radius:3px;box-sizing:border-box;"></div>
<svg class="b" style="left:459.4px;top:788.6px;" width="24" height="24" viewBox="0 0 24 24"><g fill="none" stroke="#667a89" stroke-width="1.700"><circle cx="12" cy="12" r="9.800"/><path d="M12 7v10M7 12h10" stroke-linecap="round"/></g></svg>
<div class="t" style="top:790.0px;font-size:17.8px;line-height:23px;color:#1f2733;letter-spacing:0.278px;left:492px;">flowers delivery</div>
<div class="b" style="left:1049.5px;top:785px;width:60px;height:30.5px;background:#fff8f0;border:1.500px solid #fbb26a;border-radius:4px;box-sizing:border-box;"></div>
<div class="b" style="left:1061.5px;top:797.5px;width:6px;height:6px;border-radius:3px;background:#ff8a1f"></div>
<div class="t" style="top:790.0px;font-size:17.8px;line-height:23px;color:#1f2733;letter-spacing:0.609px;right:949.391px;">63</div>
<div class="t" style="top:790.0px;font-size:17.8px;line-height:23px;color:#1f2733;letter-spacing:0.706px;right:731.294px;">90.5K</div>
<svg class="b" style="left:0;top:0" width="2048" height="989" viewBox="0 0 2048 989"><polygon points="1353.2,814.7 1353.2,808.6 1361.7,787.1 1370.8,808.3 1379.6,808.3 1388.1,807.4 1396.7,804.4 1405.7,808.1 1414.5,808.1 1422.3,804.2 1432.1,808.8 1440.6,809.1 1450.4,808.1 1450.4,814.7" fill="#e4eefa"/><polyline points="1353.2,808.6 1361.7,787.1 1370.8,808.3 1379.6,808.3 1388.1,807.4 1396.7,804.4 1405.7,808.1 1414.5,808.1 1422.3,804.2 1432.1,808.8 1440.6,809.1 1450.4,808.1" fill="none" stroke="#2b7de0" stroke-width="1.600" stroke-linejoin="round"/></svg>
<div class="b" style="left:1480.5px;top:788px;width:25.5px;height:25.5px;background:#ead8ee;border-radius:5px;"></div>
<div class="t" style="top:793.5px;font-size:12.5px;line-height:16px;color:#5b2a6e;font-weight:700;left:993.3px;width:1000px;text-align:center;">L</div>
<div class="b" style="left:1511.0px;top:788px;width:25.5px;height:25.5px;background:#fde3c0;border-radius:5px;"></div>
<div class="t" style="top:793.5px;font-size:12.5px;line-height:16px;color:#a8661c;font-weight:700;left:1023.8px;width:1000px;text-align:center;">C</div>
<svg class="b" style="left:1654.2px;top:787.8px;" width="25.5" height="25.5" viewBox="0 0 24 24"><path d="M12 2C8.13 2 5 5.13 5 9c0 5.25 7 13 7 13s7-7.75 7-13c0-3.87-3.13-7-7-7zm0 9.5c-1.38 0-2.5-1.12-2.5-2.5s1.12-2.5 2.5-2.5 2.5 1.12 2.5 2.5-1.12 2.5-2.5 2.5z" fill="#12151c"/></svg>
<svg class="b" style="left:1692.2px;top:787.5px;" width="26" height="26" viewBox="0 0 24 24"><path d="M7 9H2V7h5v2zm0 3H2v2h5v-2zm13.59 7l-3.83-3.83c-.8.52-1.74.83-2.76.83-2.76 0-5-2.24-5-5s2.24-5 5-5 5 2.24 5 5c0 1.02-.31 1.96-.83 2.75L22 17.59 20.59 19zM17 11c0-1.65-1.35-3-3-3s-3 1.35-3 3 1.35 3 3 3 3-1.35 3-3zM2 19h10v-2H2v2z" fill="#12151c"/></svg>
<svg class="b" style="left:1730.4px;top:787.5px;" width="26" height="26" viewBox="0 0 24 24"><path d="M17.21 9l-4.38-6.56c-.19-.28-.51-.42-.83-.42-.32 0-.64.14-.83.43L6.79 9H2c-.55 0-1 .45-1 1 0 .09.01.18.04.27l2.54 9.27c.23.84 1 1.46 1.92 1.46h13c.92 0 1.69-.62 1.93-1.46l2.54-9.27L23 10c0-.55-.45-1-1-1h-4.79zM9 9l3-4.4L15 9H9zm3 8c-1.1 0-2-.9-2-2s.9-2 2-2 2 .9 2 2-.9 2-2 2z" fill="#12151c"/></svg>
<div class="b" style="left:1769.0px;top:788px;width:25px;height:25px;background:#f9f9fc;border:2px solid #d6d8e6;border-radius:5px;box-sizing:border-box;"></div>
<svg class="b" style="left:1771.9px;top:790.5px;" width="20" height="20" viewBox="0 0 24 24"><path d="M6 10c-1.1 0-2 .9-2 2s.9 2 2 2 2-.9 2-2-.9-2-2-2zm12 0c-1.1 0-2 .9-2 2s.9 2 2 2 2-.9 2-2-.9-2-2-2zm-6 0c-1.1 0-2 .9-2 2s.9 2 2 2 2-.9 2-2-.9-2-2-2z" fill="#1f2733"/></svg>
<div class="t" style="top:790.0px;font-size:17.8px;line-height:23px;color:#1f2733;letter-spacing:-0.732px;right:131.732px;">$12.22</div>
<div class="b" style="left:428px;top:845.3px;width:19px;height:19px;border:2px solid #1a1f29;border-radius:3px;box-sizing:border-box;"></div>
<svg class="b" style="left:459.4px;top:842.6px;" width="24" height="24" viewBox="0 0 24 24"><g fill="none" stroke="#667a89" stroke-width="1.700"><circle cx="12" cy="12" r="9.800"/><path d="M12 7v10M7 12h10" stroke-linecap="round"/></g></svg>
<div class="t" style="top:844.0px;font-size:17.8px;line-height:23px;color:#1f2733;letter-spacing:0.291px;left:492px;">where to order flowers for delivery</div>
<div class="b" style="left:1049.5px;top:839px;width:60px;height:30.5px;background:#fff;border:1.500px solid #f7d965;border-radius:4px;box-sizing:border-box;"></div>
<div class="b" style="left:1061.5px;top:851.5px;width:6px;height:6px;border-radius:3px;background:#f5c518"></div>
<div class="t" style="top:844.0px;font-size:17.8px;line-height:23px;color:#1f2733;letter-spacing:0.609px;right:949.391px;">46</div>
<div class="t" style="top:844.0px;font-size:17.8px;line-height:23px;color:#1f2733;letter-spacing:-0.557px;right:732.557px;">210</div>
<svg class="b" style="left:0;top:0" width="2048" height="989" viewBox="0 0 2048 989"><polygon points="1353.2,868.4 1353.2,863.0 1361.7,863.0 1370.8,862.5 1379.6,862.3 1388.1,861.6 1397.1,841.5 1405.7,857.9 1414.5,862.3 1422.3,861.6 1432.1,863.0 1440.6,862.3 1450.4,862.3 1450.4,868.4" fill="#e4eefa"/><polyline points="1353.2,863.0 1361.7,863.0 1370.8,862.5 1379.6,862.3 1388.1,861.6 1397.1,841.5 1405.7,857.9 1414.5,862.3 1422.3,861.6 1432.1,863.0 1440.6,862.3 1450.4,862.3" fill="none" stroke="#2b7de0" stroke-width="1.600" stroke-linejoin="round"/></svg>
<div class="b" style="left:1480.5px;top:842px;width:25.5px;height:25.5px;background:#ead8ee;border-radius:5px;"></div>
<div class="t" style="top:847.5px;font-size:12.5px;line-height:16px;color:#5b2a6e;font-weight:700;left:993.3px;width:1000px;text-align:center;">L</div>
<div class="b" style="left:1511.0px;top:842px;width:25.5px;height:25.5px;background:#d3eedd;border-radius:5px;"></div>
<div class="t" style="top:847.5px;font-size:12.5px;line-height:16px;color:#2f7a4e;font-weight:700;left:1023.8px;width:1000px;text-align:center;">T</div>
<svg class="b" style="left:1654.2px;top:841.8px;" width="25.5" height="25.5" viewBox="0 0 24 24"><path d="M12 2C8.13 2 5 5.13 5 9c0 5.25 7 13 7 13s7-7.75 7-13c0-3.87-3.13-7-7-7zm0 9.5c-1.38 0-2.5-1.12-2.5-2.5s1.12-2.5 2.5-2.5 2.5 1.12 2.5 2.5-1.12 2.5-2.5 2.5z" fill="#12151c"/></svg>
<svg class="b" style="left:1692.2px;top:841.5px;" width="26" height="26" viewBox="0 0 24 24"><path d="M7 9H2V7h5v2zm0 3H2v2h5v-2zm13.59 7l-3.83-3.83c-.8.52-1.74.83-2.76.83-2.76 0-5-2.24-5-5s2.24-5 5-5 5 2.24 5 5c0 1.02-.31 1.96-.83 2.75L22 17.59 20.59 19zM17 11c0-1.65-1.35-3-3-3s-3 1.35-3 3 1.35 3 3 3 3-1.35 3-3zM2 19h10v-2H2v2z" fill="#12151c"/></svg>
<svg class="b" style="left:1728.4px;top:840.2px;will-change:transform;" width="30" height="30" viewBox="0 0 24 24"><path d="M4 6H2v14c0 1.1.9 2 2 2h14v-2H4V6zm16-4H8c-1.1 0-2 .9-2 2v12c0 1.1.9 2 2 2h12c1.1 0 2-.9 2-2V4c0-1.1-.9-2-2-2zm0 14H8V4h12v12z" fill="#111"/><text x="14" y="14.500" font-size="12.500" font-weight="400" fill="#111" stroke="#111" stroke-width=".300" text-anchor="middle" font-family="Liberation Sans, sans-serif">?</text></svg>
<div class="b" style="left:1769.0px;top:842px;width:25px;height:25px;background:#f9f9fc;border:2px solid #d6d8e6;border-radius:5px;box-sizing:border-box;"></div>
<svg class="b" style="left:1771.9px;top:844.5px;" width="20" height="20" viewBox="0 0 24 24"><path d="M6 10c-1.1 0-2 .9-2 2s.9 2 2 2 2-.9 2-2-.9-2-2-2zm12 0c-1.1 0-2 .9-2 2s.9 2 2 2 2-.9 2-2-.9-2-2-2zm-6 0c-1.1 0-2 .9-2 2s.9 2 2 2 2-.9 2-2-.9-2-2-2z" fill="#1f2733"/></svg>
<div class="t" style="top:844.0px;font-size:17.8px;line-height:23px;color:#1f2733;letter-spacing:-0.398px;right:131.398px;">$10.63</div>
<div class="b" style="left:428px;top:899.3px;width:19px;height:19px;border:2px solid #1a1f29;border-radius:3px;box-sizing:border-box;"></div>
<svg class="b" style="left:459.4px;top:896.6px;" width="24" height="24" viewBox="0 0 24 24"><g fill="none" stroke="#667a89" stroke-width="1.700"><circle cx="12" cy="12" r="9.800"/><path d="M12 7v10M7 12h10" stroke-linecap="round"/></g></svg>
<div class="t" style="top:898.0px;font-size:17.8px;line-height:23px;color:#1f2733;letter-spacing:0.281px;left:492px;">do you tip flower delivery</div>
<div class="b" style="left:1049.5px;top:893px;width:60px;height:30.5px;background:#fff;border:1.500px solid #45c486;border-radius:4px;box-sizing:border-box;"></div>
<div class="b" style="left:1061.5px;top:905.5px;width:6px;height:6px;border-radius:3px;background:#2fb774"></div>
<div class="t" style="top:898.0px;font-size:17.8px;line-height:23px;color:#1f2733;letter-spacing:0.016px;right:949.984px;">11</div>
<div class="t" style="top:898.0px;font-size:17.8px;line-height:23px;color:#1f2733;letter-spacing:-0.557px;right:732.557px;">210</div>
<svg class="b" style="left:0;top:0" width="2048" height="989" viewBox="0 0 2048 989"><polygon points="1353.2,921.6 1353.2,916.7 1361.7,914.0 1370.8,916.5 1379.6,910.1 1388.1,914.0 1397.1,901.3 1405.7,909.9 1414.5,909.9 1422.3,895.0 1432.1,916.5 1440.6,914.0 1450.4,914.0 1450.4,921.6" fill="#e4eefa"/><polyline points="1353.2,916.7 1361.7,914.0 1370.8,916.5 1379.6,910.1 1388.1,914.0 1397.1,901.3 1405.7,909.9 1414.5,909.9 1422.3,895.0 1432.1,916.5 1440.6,914.0 1450.4,914.0" fill="none" stroke="#2b7de0" stroke-width="1.600" stroke-linejoin="round"/></svg>
<div class="b" style="left:1480.5px;top:896px;width:25.5px;height:25.5px;background:#d3e3f6;border-radius:5px;"></div>
<div class="t" style="top:901.5px;font-size:12.5px;line-height:16px;color:#1f4f8f;font-weight:700;left:993.3px;width:1000px;text-align:center;">I</div>
<svg class="b" style="left:1652.5px;top:894.0px;" width="29" height="29" viewBox="0 0 24 24"><path d="M4 15h16v-2H4v2zm0 4h16v-2H4v2zm0-8h16V9H4v2zm0-6v2h16V5H4z" fill="#12151c"/></svg>
<svg class="b" style="left:1693.0px;top:896.2px;" width="24.5" height="24.5" viewBox="0 0 24 24"><path d="M18 4.500H6A4.500 4.500 0 0 0 1.500 9v6A4.500 4.500 0 0 0 6 19.500h12A4.500 4.500 0 0 0 22.500 15V9A4.500 4.500 0 0 0 18 4.500zM9.800 15.800V8.200l6.400 3.800z" fill="#12151c"/></svg>
<svg class="b" style="left:1729.9px;top:895.0px;" width="27" height="27" viewBox="0 0 24 24"><path d="M21 19V5c0-1.1-.9-2-2-2H5c-1.1 0-2 .9-2 2v14c0 1.1.9 2 2 2h14c1.1 0 2-.9 2-2zM8.5 13.5l2.5 3.01L14.5 12l4.5 6H5l3.5-4.5z" fill="#12151c"/></svg>
<svg class="b" style="left:1767.1px;top:894.0px;" width="29" height="29" viewBox="0 0 24 24"><path d="M4 15h16v-2H4v2zm0 4h16v-2H4v2zm0-8h16V9H4v2zm0-6v2h16V5H4z" fill="#12151c"/></svg>
<div class="t" style="top:893.2px;font-size:22px;line-height:29px;color:#3a4454;left:1410.0px;width:1000px;text-align:center;">–</div>
<div class="b" style="left:428px;top:952.8px;width:19px;height:19px;border:2px solid #1a1f29;border-radius:3px;box-sizing:border-box;"></div>
<svg class="b" style="left:459.4px;top:950.1px;" width="24" height="24" viewBox="0 0 24 24"><g fill="none" stroke="#667a89" stroke-width="1.700"><circle cx="12" cy="12" r="9.800"/><path d="M12 7v10M7 12h10" stroke-linecap="round"/></g></svg>
<div class="t" style="top:951.5px;font-size:17.8px;line-height:23px;color:#1f2733;letter-spacing:0.188px;left:492px;">what are the best flower delivery websites</div>
<div class="b" style="left:1049.5px;top:946.5px;width:60px;height:30.5px;background:#fff;border:1.500px solid #f7d965;border-radius:4px;box-sizing:border-box;"></div>
<div class="b" style="left:1061.5px;top:959.0px;width:6px;height:6px;border-radius:3px;background:#f5c518"></div>
<div class="t" style="top:951.5px;font-size:17.8px;line-height:23px;color:#1f2733;letter-spacing:0.609px;right:949.391px;">44</div>
<div class="t" style="top:951.5px;font-size:17.8px;line-height:23px;color:#1f2733;letter-spacing:-0.891px;right:732.891px;">170</div>
<svg class="b" style="left:0;top:0" width="2048" height="989" viewBox="0 0 2048 989"><polygon points="1353.2,975.8 1353.2,957.5 1361.7,953.1 1370.8,952.9 1379.6,949.0 1388.1,952.9 1397.1,969.7 1405.7,969.7 1414.5,969.7 1422.3,969.0 1432.1,970.7 1440.6,969.0 1450.4,970.7 1450.4,975.8" fill="#e4eefa"/><polyline points="1353.2,957.5 1361.7,953.1 1370.8,952.9 1379.6,949.0 1388.1,952.9 1397.1,969.7 1405.7,969.7 1414.5,969.7 1422.3,969.0 1432.1,970.7 1440.6,969.0 1450.4,970.7" fill="none" stroke="#2b7de0" stroke-width="1.600" stroke-linejoin="round"/></svg>
<div class="b" style="left:1480.5px;top:949.5px;width:25.5px;height:25.5px;background:#d3e3f6;border-radius:5px;"></div>
<div class="t" style="top:955.0px;font-size:12.5px;line-height:16px;color:#1f4f8f;font-weight:700;left:993.3px;width:1000px;text-align:center;">I</div>
<svg class="b" style="left:1652.0px;top:947.7px;will-change:transform;" width="30" height="30" viewBox="0 0 24 24"><path d="M4 6H2v14c0 1.1.9 2 2 2h14v-2H4V6zm16-4H8c-1.1 0-2 .9-2 2v12c0 1.1.9 2 2 2h12c1.1 0 2-.9 2-2V4c0-1.1-.9-2-2-2zm0 14H8V4h12v12z" fill="#111"/><text x="14" y="14.500" font-size="12.500" font-weight="400" fill="#111" stroke="#111" stroke-width=".300" text-anchor="middle" font-family="Liberation Sans, sans-serif">?</text></svg>
<svg class="b" style="left:1690.7px;top:947.5px;" width="29" height="29" viewBox="0 0 24 24"><path d="M4 15h16v-2H4v2zm0 4h16v-2H4v2zm0-8h16V9H4v2zm0-6v2h16V5H4z" fill="#12151c"/></svg>
<div class="t" style="top:951.5px;font-size:17.8px;line-height:23px;color:#1f2733;letter-spacing:-0.898px;right:131.898px;">$12.13</div>
<div class="b" style="left:0;top:960px;width:2048px;height:29px;background:linear-gradient(rgba(80,80,90,0),rgba(80,80,90,.05))"></div>
<svg class="b" style="left:2044px;top:979px" width="4" height="10" viewBox="0 0 4 10"><path d="M4 0v10H1.200Q3.400 5 4 0z" fill="#0a0a0a"/></svg>
<svg class="b" style="left:0;top:980px" width="3" height="9" viewBox="0 0 3 9"><path d="M0 0v9h2.400Q.500 5 0 0z" fill="#0a0a0a"/></svg>
</body></html>
